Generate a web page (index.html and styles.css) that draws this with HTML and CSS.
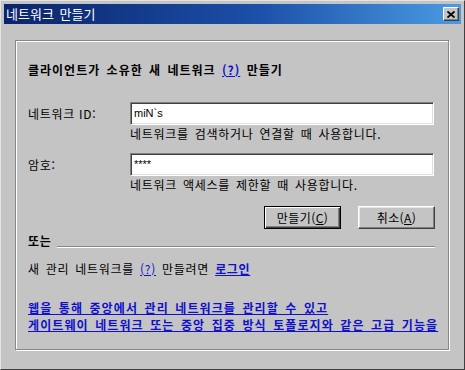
FILE: index.html
```html
<!DOCTYPE html>
<html lang="ko">
<head>
    <meta charset="UTF-8">
    <title>네트워크 만들기</title>
    <link rel="stylesheet" href="styles.css">
</head>
<body>
    <div class="window">
        <div class="titlebar">
            <span class="title">네트워크 만들기</span>
            <span class="close">
                <svg width="8" height="7" viewBox="0 0 8 7">
                    <path d="M0.5 0.5 L7.5 6.5 M7.5 0.5 L0.5 6.5" stroke="#000" stroke-width="1.8" fill="none"/>
                </svg>
            </span>
        </div>

        <div class="panel">
            <h1 class="heading">클라이언트가 소유한 새 네트워크 <a class="help">(?)</a> 만들기</h1>

            <div class="field">
                <label>네트워크 ID:</label>
                <div class="textbox">miN`s</div>
                <div class="hint">네트워크를 검색하거나 연결할 때 사용합니다.</div>
            </div>

            <div class="field second">
                <label>암호:</label>
                <div class="textbox">****</div>
                <div class="hint">네트워크 액세스를 제한할 때 사용합니다.</div>
            </div>

            <div class="buttons">
                <button class="btn default">만들기(<u>C</u>)</button>
                <button class="btn">취소(<u>A</u>)</button>
            </div>

            <div class="divider">
                <span class="divider-label">또는</span>
                <span class="rule"></span>
            </div>

            <p class="managed">새 관리 네트워크를 <a class="help plain">(?)</a> 만들려면 <a class="login">로그인</a></p>

            <p class="more">
                <a>웹을 통해 중앙에서 관리 네트워크를 관리할 수 있고</a><br>
                <a>게이트웨이 네트워크 또는 중앙 집중 방식 토폴로지와 같은 고급 기능을</a>
            </p>
        </div>
    </div>
</body>
</html>
```

FILE: styles.css
```css
body {
    margin: 0;
    font-family: "Noto Sans CJK KR", "Liberation Sans", sans-serif;
    font-size: 12px;
    color: #000;
    background: #c4c4c4;
}
.window {
    box-sizing: border-box;
    width: 465px;
    height: 370px;
    padding: 3px;
    border: 1px solid;
    border-color: #e4e4e4 #404040 #404040 #e4e4e4;
    background: #c4c4c4;
    overflow: hidden;
}
.titlebar {
    height: 20px;
    display: flex;
    align-items: center;
    justify-content: space-between;
    padding-left: 2px;
    background: linear-gradient(to right, #0a246a 0%, #1c4fa8 55%, #4a9be2 100%);
}
.title {
    color: #fff;
    font-size: 13px;
    line-height: 20px;
    word-spacing: 2px;
}
.close {
    box-sizing: border-box;
    width: 16px;
    height: 14px;
    margin-right: 2px;
    display: flex;
    align-items: center;
    justify-content: center;
    background: #c4c4c4;
    border: 1px solid;
    border-color: #fff #404040 #404040 #fff;
    box-shadow: inset -1px -1px 0 #808080;
}
.panel {
    box-sizing: border-box;
    height: 310px;
    margin: 16px 12px 0 11px;
    padding: 21px 13px 0 12px;
    border: 1px solid #888;
    box-shadow: 1px 1px 0 #fff, inset 1px 1px 0 #fff;
    word-spacing: 2px;
    letter-spacing: 0.7px;
}
.heading {
    margin: 0;
    font-size: 12px;
    font-weight: bold;
    line-height: 16px;
    letter-spacing: 1px;
}
a {
    color: #1010cc;
    text-decoration: underline;
}
.help {
    font-weight: bold;
}
.help.plain {
    font-weight: normal;
}
.field {
    display: grid;
    grid-template-columns: 102px 304px;
    margin-top: 24px;
}
.field.second {
    margin-top: 11px;
}
.field label {
    align-self: center;
    line-height: 16px;
    word-spacing: 0;
}
.textbox {
    box-sizing: border-box;
    height: 23px;
    padding: 3px 0 0 3px;
    font-family: "Liberation Sans", sans-serif;
    font-size: 11px;
    line-height: 14px;
    letter-spacing: 0;
    background: #fff;
    border: 1px solid;
    border-color: #808080 #fff #fff #808080;
    box-shadow: inset 1px 1px 0 #404040, inset -1px -1px 0 #dfdfdf;
}
.hint {
    grid-column: 2;
    margin-top: 1px;
    line-height: 16px;
}
.buttons {
    display: flex;
    justify-content: flex-end;
    gap: 17px;
    margin-top: 13px;
}
.btn {
    box-sizing: border-box;
    width: 77px;
    height: 23px;
    padding: 0;
    font-family: inherit;
    font-size: 12px;
    letter-spacing: 0.4px;
    color: #000;
    background: #c4c4c4;
    border: 1px solid;
    border-color: #fff #404040 #404040 #fff;
    box-shadow: inset -1px -1px 0 #808080, inset 1px 1px 0 #e4e4e4;
}
.btn.default {
    border-color: #000;
    box-shadow: inset 1px 1px 0 #fff, inset -1px -1px 0 #404040, inset -2px -2px 0 #808080;
}
.divider {
    display: flex;
    align-items: flex-end;
    margin-top: 4px;
}
.divider-label {
    font-weight: bold;
    line-height: 16px;
}
.rule {
    flex: 1;
    height: 0;
    margin: 0 0 1px 6px;
    border-top: 1px solid #888;
    border-bottom: 1px solid #fff;
}
.managed {
    margin: 12px 0 0;
    line-height: 16px;
}
.login {
    font-weight: bold;
}
.more {
    margin: 22px 0 0;
    line-height: 17px;
    white-space: nowrap;
    font-weight: bold;
    letter-spacing: 1.1px;
}
```
